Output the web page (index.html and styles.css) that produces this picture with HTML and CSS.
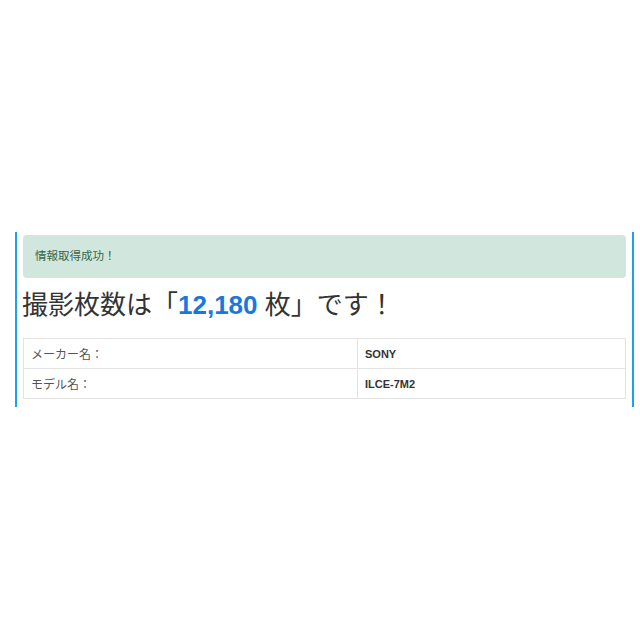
FILE: index.html
```html
<!DOCTYPE html>
<html lang="ja">
<head>
  <meta charset="UTF-8" />
  <meta name="viewport" content="width=device-width, initial-scale=1.0"/>
  <title>撮影枚数チェック</title>
  <link rel="stylesheet" href="styles.css">
</head>
<body>

  <div class="page">
    <div class="result">
      <div class="alert-success">情報取得成功！</div>

      <h1 class="shots">撮影枚数は「<span class="count">12,180</span> 枚」です！</h1>

      <table class="info">
        <tr>
          <td class="label">メーカー名：</td>
          <td class="value">SONY</td>
        </tr>
        <tr>
          <td class="label">モデル名：</td>
          <td class="value">ILCE-7M2</td>
        </tr>
      </table>
    </div>
  </div>

</body>
</html>
```

FILE: styles.css
```css
* {
  margin: 0;
  padding: 0;
  box-sizing: border-box;
}

body {
  background: #fff;
  color: #333;
  font-family: "Liberation Sans", "Noto Sans CJK JP", sans-serif;
}

.page {
  padding: 232px 6px 0 15px;
}

.result {
  border-left: 2px solid #1ca3e3;
  border-right: 2px solid #1ca3e3;
  padding: 3px 6px 8px 6px;
}

.alert-success {
  background: #d1e7dd;
  color: #35654a;
  font-size: 11.5px;
  line-height: 13px;
  padding: 15px 12px;
  border-radius: 4px;
}

.shots {
  font-weight: normal;
  font-size: 26px;
  line-height: 30px;
  margin: 12px 0 18px -1px;
  color: #333;
}

.count {
  color: #1a78dc;
  font-weight: bold;
}

.info {
  width: 100%;
  border-collapse: collapse;
  font-size: 12px;
}

.info td {
  border: 1px solid #e3e3e3;
  height: 30px;
  padding: 0 7px;
  vertical-align: middle;
}

.label {
  width: 334px;
  color: #555;
}

.value {
  font-weight: bold;
  font-size: 11px;
  color: #333;
}
```
